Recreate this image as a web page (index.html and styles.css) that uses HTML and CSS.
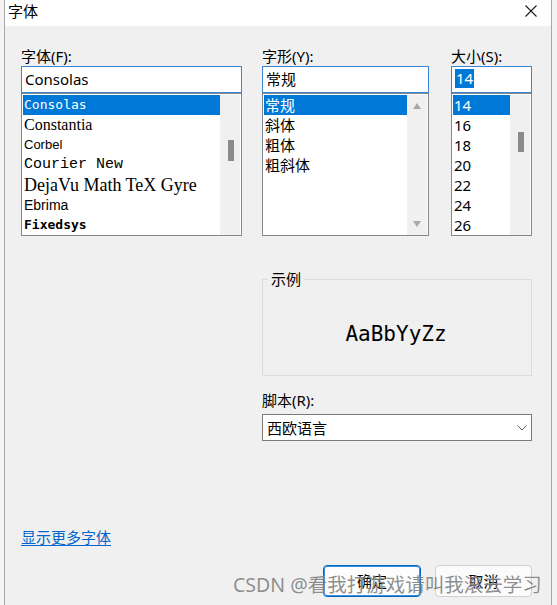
FILE: index.html
```html
<!DOCTYPE html>
<html lang="zh-CN">
<head>
<meta charset="utf-8">
<title>字体</title>
<link rel="stylesheet" href="styles.css">
</head>
<body>
<div class="dialog">
  <div class="titlebar">
    <span class="title">字体</span>
    <svg class="close" width="12" height="12" viewBox="0 0 12 12"><path d="M0.5 0.5 L11.5 11.5 M11.5 0.5 L0.5 11.5" stroke="#1a1a1a" stroke-width="1.1" fill="none"/></svg>
  </div>
  <div class="content">
    <div class="columns">
      <div class="col col-font">
        <div class="label">字体(F):</div>
        <div class="input">Consolas</div>
        <div class="list">
          <div class="rows">
            <div class="row sel f-consolas">Consolas</div>
            <div class="row f-constantia">Constantia</div>
            <div class="row f-corbel">Corbel</div>
            <div class="row f-courier">Courier New</div>
            <div class="row f-dejavu">DejaVu Math TeX Gyre</div>
            <div class="row f-ebrima">Ebrima</div>
            <div class="row f-fixedsys">Fixedsys</div>
          </div>
          <div class="scrollbar"><div class="thumb thumb-font"></div></div>
        </div>
      </div>
      <div class="col col-style">
        <div class="label">字形(Y):</div>
        <div class="input">常规</div>
        <div class="list">
          <div class="rows">
            <div class="row sel">常规</div>
            <div class="row">斜体</div>
            <div class="row">粗体</div>
            <div class="row">粗斜体</div>
          </div>
          <div class="scrollbar arrows"><div class="arrow-up"></div><div class="arrow-down"></div></div>
        </div>
      </div>
      <div class="col col-size">
        <div class="label">大小(S):</div>
        <div class="input"><span class="hl">14</span></div>
        <div class="list">
          <div class="rows">
            <div class="row sel">14</div>
            <div class="row">16</div>
            <div class="row">18</div>
            <div class="row">20</div>
            <div class="row">22</div>
            <div class="row">24</div>
            <div class="row">26</div>
          </div>
          <div class="scrollbar"><div class="thumb thumb-size"></div></div>
        </div>
      </div>
    </div>
    <div class="lower">
      <div class="sample">
        <span class="legend">示例</span>
        <div class="sample-text">AaBbYyZz</div>
      </div>
      <div class="label script-label">脚本(R):</div>
      <div class="combo">
        <span>西欧语言</span>
        <svg width="10" height="6" viewBox="0 0 10 6"><path d="M0.5 0.5 L5 5 L9.5 0.5" stroke="#606060" stroke-width="1" fill="none"/></svg>
      </div>
    </div>
    <div class="more"><a class="link" href="#">显示更多字体</a></div>
    <div class="buttons">
      <div class="btn btn-ok">确定</div>
      <div class="btn btn-cancel">取消</div>
    </div>
  </div>
  <div class="watermark">CSDN @看我打游戏请叫我滚去学习</div>
</div>
</body>
</html>
```
FILE: styles.css
```css
html, body {
  margin: 0;
  padding: 0;
}
body {
  background: #f4f4f4;
  width: 557px;
  height: 605px;
  overflow: hidden;
  font-family: "Noto Sans", "Noto Sans CJK SC", sans-serif;
  font-size: 15px;
  color: #000;
}
.dialog {
  position: relative;
  margin-left: 4px;
  width: 546px;
  height: 605px;
  border-left: 1px solid #a8a8a8;
  border-right: 1px solid #a8a8a8;
  background: #f0f0f0;
  overflow: hidden;
}
.titlebar {
  height: 26px;
  background: #fff;
  display: flex;
  justify-content: space-between;
  align-items: flex-start;
  padding-left: 3px;
  box-sizing: border-box;
}
.title {
  font-family: "Noto Sans CJK SC", sans-serif;
  line-height: 20px;
  padding-top: 1px;
}
.close {
  margin-top: 5px;
  margin-right: 14px;
}
.content {
  padding: 20px 19px 0 16px;
}
.columns {
  display: flex;
}
.col-font { width: 221px; }
.col-style { width: 167px; margin-left: 20px; }
.col-size { width: 81px; margin-left: 22px; }
.label {
  line-height: 20px;
  height: 20px;
  white-space: nowrap;
}
.input {
  height: 27px;
  box-sizing: border-box;
  border: 1px solid #3a86d4;
  background: #fff;
  padding-left: 3px;
  line-height: 25px;
  white-space: nowrap;
}
.hl {
  display: inline-block;
  background: #0078d7;
  color: #fff;
  line-height: 19px;
  padding: 0 1px;
  vertical-align: 1px;
}
.list {
  height: 143px;
  box-sizing: border-box;
  border: 1px solid #828790;
  padding: 1px 1px 0 1px;
  background: #fff;
  display: flex;
  overflow: hidden;
}
.rows {
  flex: 1;
}
.row {
  height: 20px;
  line-height: 20px;
  padding-left: 1px;
  white-space: nowrap;
  overflow: hidden;
}
.row.sel {
  background: #0078d7;
  color: #fff;
}
.scrollbar {
  width: 20px;
  background: #f0f0f0;
}
.thumb {
  width: 6px;
  margin-left: 8px;
  background: #8b8b8b;
}
.thumb-font { margin-top: 45px; height: 21px; }
.thumb-size { margin-top: 37px; height: 20px; }
.arrows {
  display: flex;
  flex-direction: column;
  justify-content: space-between;
  align-items: center;
  padding: 8px 0 8px;
  box-sizing: border-box;
}
.arrow-up {
  width: 0; height: 0;
  border-left: 4.5px solid transparent;
  border-right: 4.5px solid transparent;
  border-bottom: 6px solid #a8a8a8;
}
.arrow-down {
  width: 0; height: 0;
  border-left: 4.5px solid transparent;
  border-right: 4.5px solid transparent;
  border-top: 6px solid #a8a8a8;
}
.f-consolas { font-family: "DejaVu Sans Mono", monospace; font-size: 13px; }
.f-constantia { font-family: "Liberation Serif", serif; font-size: 16px; font-weight: 500; }
.f-corbel { font-family: "Liberation Sans", sans-serif; font-size: 13px; }
.f-courier { font-family: "Liberation Mono", monospace; font-size: 15px; }
.f-dejavu { font-family: "Liberation Serif", serif; font-size: 18px; }
.f-ebrima { font-family: "Liberation Sans", sans-serif; font-size: 14px; }
.f-fixedsys { font-family: "DejaVu Sans Mono", monospace; font-size: 13px; font-weight: bold; }
.lower {
  margin-left: 241px;
  width: 270px;
}
.sample {
  position: relative;
  margin-top: 43px;
  height: 97px;
  box-sizing: border-box;
  border: 1px solid #dcdcdc;
  padding-top: 41px;
  text-align: center;
}
.legend {
  position: absolute;
  top: -11px;
  left: 5px;
  padding: 0 3px;
  background: #f0f0f0;
  line-height: 20px;
  font-family: "Noto Sans CJK SC", sans-serif;
}
.sample-text {
  font-family: "DejaVu Sans Mono", monospace;
  font-size: 21px;
  line-height: 26px;
  padding-right: 2px;
}
.script-label {
  margin-top: 14px;
}
.combo {
  margin-top: 4px;
  height: 27px;
  box-sizing: border-box;
  border: 1px solid #7a7a7a;
  background: #fff;
  display: flex;
  justify-content: space-between;
  align-items: center;
  padding: 0 4px 0 4px;
}
.more {
  margin-top: 86px;
  line-height: 20px;
}
.link {
  color: #0066cc;
  text-decoration: underline;
  text-underline-offset: 2px;
}
.buttons {
  margin-top: 18px;
  display: flex;
  justify-content: flex-end;
  gap: 14px;
}
.btn {
  height: 32px;
  box-sizing: border-box;
  border-radius: 4px;
  display: flex;
  align-items: center;
  justify-content: center;
  line-height: 20px;
}
.btn-ok {
  width: 98px;
  border: 1px solid #0067c0;
  box-shadow: inset 0 0 0 1px #3c8fdc;
  background: #fdfdfd;
}
.btn-cancel {
  width: 97px;
  border: 1px solid #d0d0d0;
  background: #fbfbfb;
}
.watermark {
  position: absolute;
  left: 228px;
  top: 574px;
  font-family: "Noto Sans", "Noto Sans CJK SC", sans-serif;
  font-size: 19.5px;
  line-height: 22px;
  color: rgba(105, 105, 105, 0.75);
  white-space: nowrap;
  text-shadow: 0 0 1px rgba(255,255,255,0.6);
}
```
